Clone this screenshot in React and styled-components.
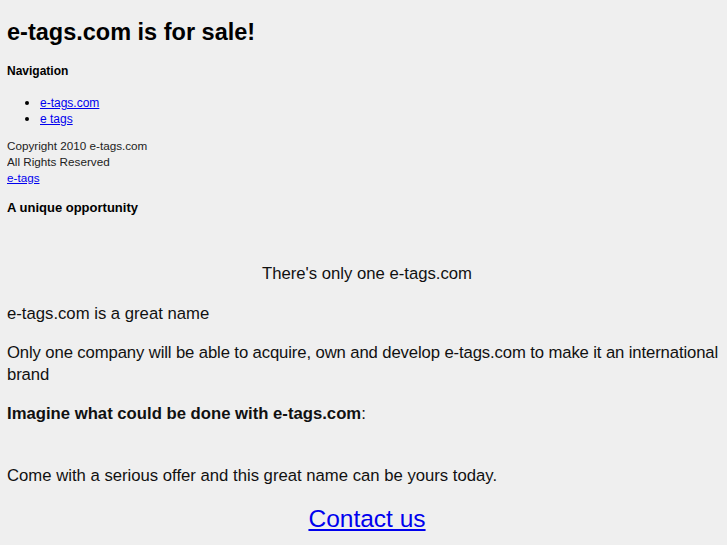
import React from 'react'
import styled, { createGlobalStyle } from 'styled-components'

const GlobalStyle = createGlobalStyle`
body {
  margin: 8px 0 8px 7px;
  background: #efefef;
  color: #000;
  font-family: "Liberation Sans", Arial, sans-serif;
}
`
const Title = styled.h1`
font-size: 23.5px;
font-weight: bold;
margin: 10px 0 17px;
line-height: 28px;
`
const SectionTitle = styled.h3`
font-size: ${props => props.size || 13}px;
font-weight: bold;
margin: 0;
line-height: 16px;
`
const NavList = styled.ul`
margin: 16px 0 11px;
padding-left: 33px;
font-size: 12px;
line-height: 16px;
li::marker{
  font-size: 13px;
}
`
const Link = styled.a`
color: #0000ee;
text-decoration: underline;
`
const Footer = styled.div`
font-size: 11.7px;
line-height: 16px;
color: #222;
margin-bottom: 14px;
`
const Pitch = styled.div`
font-size: 16.7px;
line-height: 22px;
margin-top: 47px;
color: #111;
`
const Para = styled.p`
margin: 0 0 ${props => props.gap || 17}px;
text-align: ${props => props.center ? 'center' : 'left'};
letter-spacing: ${props => props.tight ? '-0.12px' : 'normal'};
`
const Strong = styled.strong`
font-weight: bold;
`
const Contact = styled.p`
text-align: center;
font-size: 24.5px;
margin: 18px 0 0;
line-height: 28px;
`

const App = () => {
  return (
    <>
      <GlobalStyle />
      <Title>e-tags.com is for sale!</Title>
      <SectionTitle size={12}>Navigation</SectionTitle>
      <NavList>
        <li><Link href="#">e-tags.com </Link></li>
        <li><Link href="#">e tags</Link></li>
      </NavList>
      <Footer>
        Copyright 2010 e-tags.com<br />
        All Rights Reserved<Link href="#"> </Link><br />
        <Link href="#">e-tags</Link>
      </Footer>
      <SectionTitle>A unique opportunity</SectionTitle>
      <Pitch>
        <Para center gap={18}>There's only one e-tags.com</Para>
        <Para>e-tags.com is a great name</Para>
        <Para tight>Only one company will be able to acquire, own and develop e-tags.com to make it an international brand</Para>
        <Para gap={40}><Strong>Imagine what could be done with e-tags.com</Strong>:</Para>
        <Para gap={0}>Come with a serious offer and this great name can be yours today.</Para>
        <Contact><Link href="#">Contact us</Link></Contact>
      </Pitch>
    </>
  )
}

export default App
